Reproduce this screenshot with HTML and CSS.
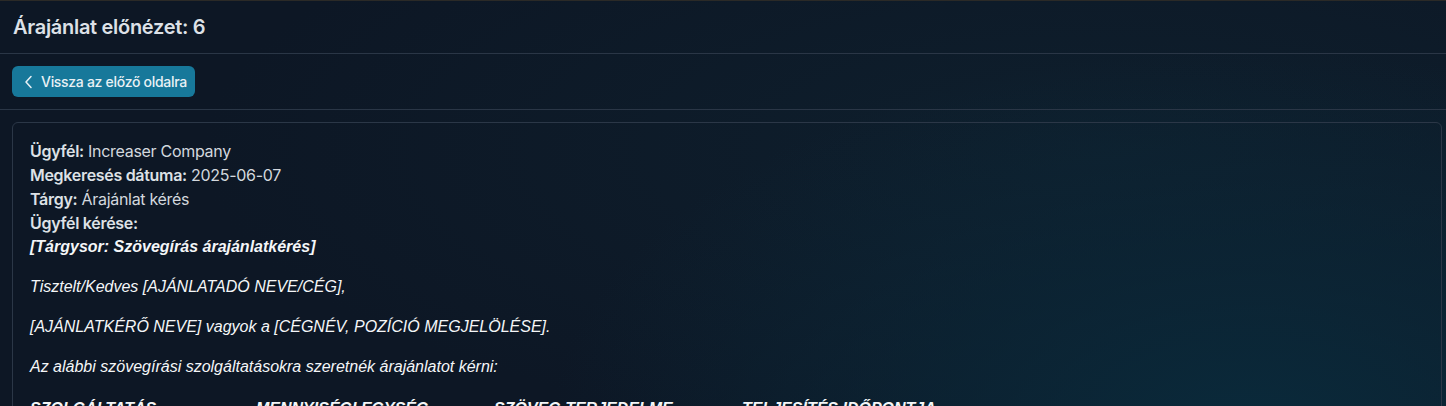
FILE: index.html
```html
<!DOCTYPE html>
<html lang="hu">
<head>
    <meta charset="UTF-8">
    <title>Árajánlat előnézet: 6</title>
    <link rel="stylesheet" href="styles.css">
</head>
<body>

<div class="page">
    <div class="page__header">
        <h1 class="page__title">Árajánlat előnézet: 6</h1>
    </div>
    <div class="page__toolbar">
        <button class="back-button">
            <svg class="back-button__icon" width="10" height="14" viewBox="0 0 10 14" fill="none">
                <path d="M7 1.5 L2 7 L7 12.5" stroke="currentColor" stroke-width="1.5" stroke-linecap="round" stroke-linejoin="round"/>
            </svg>
            Vissza az előző oldalra
        </button>
    </div>

    <div class="preview">
        <div class="preview__meta">
            <div><b>Ügyfél:</b> Increaser Company</div>
            <div><b>Megkeresés dátuma:</b> 2025-06-07</div>
            <div><b>Tárgy:</b> Árajánlat kérés</div>
            <div><b>Ügyfél kérése:</b></div>
        </div>
        <div class="preview__body">
            <p><strong>[Tárgysor: Szövegírás árajánlatkérés]</strong></p>
            <p>Tisztelt/Kedves [AJÁNLATADÓ NEVE/CÉG],</p>
            <p>[AJÁNLATKÉRŐ NEVE] vagyok a [CÉGNÉV, POZÍCIÓ MEGJELÖLÉSE].</p>
            <p>Az alábbi szövegírási szolgáltatásokra szeretnék árajánlatot kérni:</p>
            <div class="preview__table">
                <span>Szolgáltatás</span>
                <span>Mennyiségi egység</span>
                <span>Szöveg terjedelme</span>
                <span>Teljesítés időpontja</span>
            </div>
        </div>
    </div>
</div>

</body>
</html>
```

FILE: styles.css
```css
* {
    box-sizing: border-box;
    margin: 0;
    padding: 0;
}

html, body {
    height: 100%;
}

body {
    font-family: Inter, "Noto Sans", sans-serif;
    color: #d5dae1;
    background: #0d1725;
    background-image:
        radial-gradient(ellipse 700px 380px at 1250px 430px, #0a2a3b 0%, rgba(10, 42, 59, 0) 100%),
        radial-gradient(ellipse 900px 300px at 1100px 150px, #0e1f2d 0%, rgba(14, 31, 45, 0) 100%);
    border-top: 1px solid #2b2a27;
    overflow: hidden;
}

.page__header {
    height: 53px;
    display: flex;
    align-items: center;
    padding: 0 13px;
    border-bottom: 1px solid #2a3646;
}

.page__title {
    font-size: 20px;
    font-weight: 600;
    color: #dde1e7;
    letter-spacing: -0.3px;
}

.page__toolbar {
    padding: 12px;
    border-bottom: 1px solid #2a3646;
}

.back-button {
    display: flex;
    align-items: center;
    gap: 7px;
    height: 31px;
    padding: 0 8px 0 12px;
    background: #17789a;
    color: #e9f1f5;
    border: none;
    border-radius: 6px;
    font-family: Inter, "Noto Sans", sans-serif;
    font-size: 14px;
    font-weight: 500;
    letter-spacing: -0.3px;
    cursor: pointer;
}

.back-button__icon {
    display: block;
}

.preview {
    margin: 12px 4px 0 12px;
    border: 1px solid #2b3747;
    border-radius: 6px;
    padding: 16px 17px;
    min-height: 400px;
}

.preview__meta {
    font-size: 16px;
    line-height: 24px;
    letter-spacing: -0.3px;
    color: #d3d8de;
}

.preview__meta b {
    font-weight: 600;
    color: #dde1e6;
}

.preview__body {
    font-family: "Liberation Sans", Arial, sans-serif;
    font-style: italic;
    font-size: 16px;
    line-height: 24px;
    color: #f4f6f8;
}

.preview__body p {
    margin-bottom: 16px;
}

.preview__body strong {
    font-weight: 700;
}

.preview__table {
    display: grid;
    grid-template-columns: 226px 238px 248px 240px;
    font-weight: 700;
    text-transform: uppercase;
    padding-top: 2px;
}
```
